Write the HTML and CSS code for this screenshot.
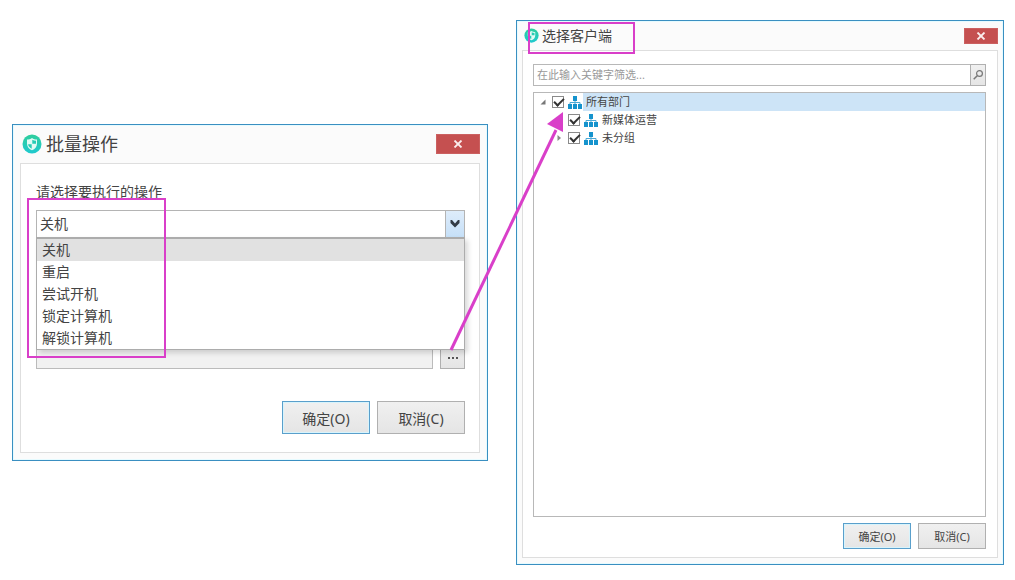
FILE: index.html
```html
<!DOCTYPE html>
<html lang="zh-CN">
<head>
    <meta charset="UTF-8">
    <meta name="viewport" content="width=device-width, initial-scale=1.0">
    <title>批量操作</title>
    <link rel="stylesheet" href="styles.css">
</head>
<body>
    <svg class="symbols" aria-hidden="true">
        <defs>
            <linearGradient id="logo-fill" x1="0" y1="0" x2="0" y2="1">
                <stop offset="0" stop-color="#2fce9c"/>
                <stop offset="1" stop-color="#1fc9cf"/>
            </linearGradient>
        </defs>
        <symbol id="logo" viewBox="0 0 20 20">
            <circle cx="10" cy="10" r="9.5" fill="url(#logo-fill)"/>
            <path d="M10 4C8.500 5.100 6.900 5.500 5 5.500V9.500C5 12.900 7 15.100 10 16.200C13 15.100 15 12.900 15 9.500V5.500C13.100 5.500 11.500 5.100 10 4Z" fill="#e4fbf5"/>
            <path d="M10.300 5.700C11.400 6.300 12.600 6.600 14 6.700V9.700H10.300ZM6.100 10.300H9.700V14.700C7.600 13.800 6.300 12.300 6.100 10.300Z" fill="#27ccb5"/>
        </symbol>
        <symbol id="org" viewBox="0 0 14 13">
            <path d="M5 0H9V5H5ZM0 8H4V13H0ZM5 8H9V13H5ZM10 8H14V13H10Z" fill="#1593cd"/>
            <path d="M7 5V8M2 8V6.500H12V8" fill="none" stroke="#4aa9d6"/>
        </symbol>
        <symbol id="cross" viewBox="0 0 10 8">
            <path d="M1.500 .5L8.500 7.500M8.500 .5L1.500 7.500" fill="none" stroke="#fbeeee" stroke-width="1.800"/>
        </symbol>
    </svg>

    <main>
        <section class="dialog batch" aria-labelledby="batch-title">
            <header>
                <svg class="logo"><use href="#logo"/></svg>
                <h1 id="batch-title">批量操作</h1>
                <button class="close" type="button" aria-label="关闭"><svg><use href="#cross"/></svg></button>
            </header>
            <form class="panel">
                <label for="action">请选择要执行的操作</label>
                <div class="combo">
                    <select id="action">
                        <option>关机</option>
                        <option>重启</option>
                        <option>尝试开机</option>
                        <option>锁定计算机</option>
                        <option>解锁计算机</option>
                    </select>
                    <span class="arrow"><svg viewBox="0 0 10 8"><path d="M.5 0H2L5 3.500L8 0H9.500V3L5 7.500L.5 3Z" fill="#333b45"/></svg></span>
                    <ul class="options">
                        <li class="selected">关机</li>
                        <li>重启</li>
                        <li>尝试开机</li>
                        <li>锁定计算机</li>
                        <li>解锁计算机</li>
                    </ul>
                </div>
                <div class="target">
                    <input type="text" aria-label="客户端" readonly>
                    <button type="button" aria-label="选择客户端"><svg viewBox="0 0 10 2"><path d="M0 0H2V2H0ZM4 0H6V2H4ZM8 0H10V2H8Z" fill="#555"/></svg></button>
                </div>
                <div class="actions">
                    <button class="primary" type="button">确定(O)</button>
                    <button type="button">取消(C)</button>
                </div>
            </form>
            <div class="mark"></div>
        </section>

        <section class="dialog clients" aria-labelledby="clients-title">
            <header>
                <svg class="logo"><use href="#logo"/></svg>
                <h1 id="clients-title">选择客户端</h1>
                <button class="close" type="button" aria-label="关闭"><svg><use href="#cross"/></svg></button>
            </header>
            <form class="panel">
                <div class="search">
                    <input type="text" placeholder="在此输入关键字筛选..." aria-label="筛选">
                    <button type="button" aria-label="搜索"><svg viewBox="0 0 10 10"><circle cx="6.500" cy="3.500" r="2.900" fill="none" stroke="#777" stroke-width="1.200"/><path d="M4.500 5.500L.7 9.300" stroke="#777" stroke-width="1.500"/></svg></button>
                </div>
                <ul class="tree">
                    <li>
                        <svg class="toggle" viewBox="0 0 6 6"><path d="M5.500 .5V5.500H.5Z" fill="#777"/></svg>
                        <input type="checkbox" id="all" checked>
                        <svg class="org"><use href="#org"/></svg>
                        <label class="current" for="all">所有部门</label>
                    </li>
                    <li class="child">
                        <span class="toggle"></span>
                        <input type="checkbox" id="media" checked>
                        <svg class="org"><use href="#org"/></svg>
                        <label for="media">新媒体运营</label>
                    </li>
                    <li class="child">
                        <svg class="toggle" viewBox="0 0 6 6"><path d="M1.500 0L5 3L1.500 6Z" fill="#888"/></svg>
                        <input type="checkbox" id="ungrouped" checked>
                        <svg class="org"><use href="#org"/></svg>
                        <label for="ungrouped">未分组</label>
                    </li>
                </ul>
                <div class="actions">
                    <button class="primary" type="button">确定(O)</button>
                    <button type="button">取消(C)</button>
                </div>
            </form>
            <div class="mark"></div>
            <svg class="pointer" viewBox="0 0 118 240">
                <path d="M2 238L107 18" stroke="#d93fc9" stroke-width="3"/>
                <path d="M114 0L98 12L114 20Z" fill="#d93fc9"/>
            </svg>
        </section>
    </main>
</body>
</html>
```
FILE: styles.css
```css
*{
    box-sizing: border-box;
    margin: 0;
    padding: 0;
}

body{
    background-color: #fff;
    color: #444;
    font-family: "Noto Sans", "Noto Sans CJK SC", sans-serif;
}

button, input, select{
    font: inherit;
    color: inherit;
}

ul{
    list-style: none;
}

.symbols{
    position: absolute;
    width: 0;
    height: 0;
}

main{
    display: flex;
    align-items: center;
    gap: 28px;
    padding: 20px 11px 15px 12px;
}

/* dialogs */
.dialog{
    position: relative;
    min-width: 0;
    border: 1px solid #3a8fc1;
    background-color: #fbfbfb;
    box-shadow: inset 0 0 0 1px #e6fbff;
}

.dialog header{
    display: flex;
    align-items: center;
}

.dialog h1{
    flex: 1;
    font-weight: 400;
}

.close{
    display: flex;
    align-items: center;
    justify-content: center;
    border: 1px solid #cb6060;
    background-color: #c55050;
}

.close svg{
    width: 10px;
    height: 8px;
}

.panel{
    border: 1px solid #dedede;
    background-color: #fff;
}

.actions{
    display: flex;
    justify-content: flex-end;
    gap: 7px;
}

.actions button, .target button, .search button{
    border: 1px solid #b0b0b0;
    background: linear-gradient(#f0f0f0, #e5e5e5);
}

.actions .primary{
    border-color: #5a9fcb;
    box-shadow: inset 0 0 0 1px #d8f4fc;
}

/* batch operation */
.batch{
    flex: 1 1 476px;
    padding: 0 7px 7px;
    font-size: 14px;
}

.batch header{
    height: 38px;
    padding-left: 2px;
}

.batch .logo{
    width: 20px;
    height: 20px;
    margin-right: 4px;
}

.batch h1{
    font-size: 18px;
    line-height: 24px;
}

.batch .close{
    width: 44px;
    height: 20px;
}

.batch .panel{
    padding: 16px 14px 18px 15px;
}

.batch label{
    display: block;
    margin-bottom: 6px;
    line-height: 24px;
}

.combo{
    position: relative;
    display: flex;
    height: 28px;
    border: 1px solid #b4b4b4;
}

.combo select{
    flex: 1;
    padding: 0 0 2px 3px;
    border: 0;
    background-color: #fff;
    appearance: none;
}

.arrow{
    display: flex;
    align-items: center;
    justify-content: center;
    width: 19px;
    border-left: 1px solid #b4b4b4;
    background: linear-gradient(#deecfa, #c6e0f8);
}

.arrow svg{
    width: 10px;
    height: 8px;
}

.options{
    position: absolute;
    top: 26px;
    left: -1px;
    right: -1px;
    border: 1px solid #acacac;
    border-top-width: 2px;
    background-color: #fff;
    box-shadow: 3px 3px 5px rgba(0, 0, 0, .15);
}

.options li{
    padding-left: 5px;
    line-height: 22px;
}

.options .selected{
    background-color: #e1e1e1;
}

.target{
    display: flex;
    gap: 7px;
    height: 28px;
    margin-top: 103px;
}

.target input{
    flex: 1;
    min-width: 0;
    border: 1px solid #bbb;
    background-color: #f1f1f1;
}

.target button{
    display: flex;
    align-items: flex-end;
    justify-content: center;
    width: 25px;
    padding-bottom: 9px;
}

.target svg{
    width: 10px;
    height: 2px;
}

.batch .actions{
    margin-top: 32px;
}

.batch .actions button{
    width: 88px;
    height: 33px;
}

/* client picker */
.clients{
    flex: 1 1 488px;
    padding: 0 5px 6px;
    font-size: 11px;
}

.clients header{
    height: 29px;
    padding-left: 2px;
}

.clients .logo{
    width: 15px;
    height: 15px;
    margin-right: 3px;
}

.clients h1{
    font-size: 14px;
    line-height: 20px;
}

.clients .close{
    width: 34px;
    height: 16px;
}

.clients .panel{
    padding: 13px 11px 8px 10px;
}

.search{
    display: flex;
    height: 22px;
}

.search input{
    flex: 1;
    min-width: 0;
    padding: 0 0 2px 3px;
    border: 1px solid #b8b8b8;
    border-right: 0;
}

.search input::placeholder{
    color: #999;
}

.search button{
    display: flex;
    align-items: center;
    justify-content: center;
    width: 16px;
}

.search svg{
    width: 10px;
    height: 10px;
    flex: none;
}

.tree{
    min-height: 425px;
    margin: 6px 0;
    padding-left: 6px;
    border: 1px solid #b8b8b8;
}

.tree li{
    display: flex;
    align-items: center;
    height: 18px;
}

.tree .child{
    padding-left: 16px;
}

.toggle{
    width: 6px;
    height: 6px;
    margin-right: 6px;
}

.tree input{
    width: 12px;
    height: 12px;
    border: 1px solid #8a8a8a;
    background-color: #fff;
    appearance: none;
}

.tree input:checked::before{
    content: "";
    display: block;
    width: 8px;
    height: 4px;
    margin: 1px;
    border: solid #333;
    border-width: 0 0 2px 2px;
    transform: rotate(-45deg);
}

.org{
    width: 14px;
    height: 13px;
    margin: 0 1px 0 4px;
}

.tree label{
    flex: 1;
    padding-left: 3px;
    line-height: 18px;
}

.tree .current{
    background-color: #cde4f7;
}

.clients .actions button{
    width: 68px;
    height: 26px;
}

/* callouts */
.mark{
    position: absolute;
    border: 2px solid #d93fc9;
    pointer-events: none;
}

.batch .mark{
    top: 73px;
    left: 14px;
    width: 139px;
    height: 160px;
}

.clients .mark{
    top: 1px;
    left: 11px;
    width: 107px;
    height: 32px;
}

.pointer{
    position: absolute;
    top: 91px;
    left: -68px;
    width: 118px;
    height: 240px;
    pointer-events: none;
}
```
